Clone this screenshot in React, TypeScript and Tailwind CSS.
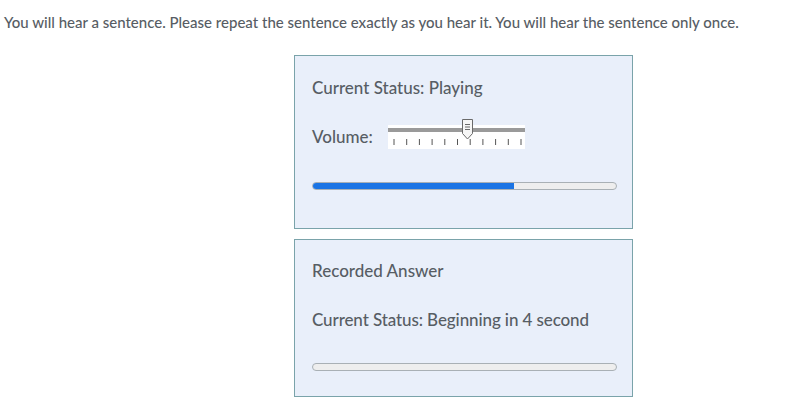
import React from "react";

function Slider() {
  const ticks = Array.from({ length: 11 }, (_, i) => 6 + i * 12.7);
  return (
    <div className="relative w-[137px] h-[24px] bg-white">
      <div className="absolute left-0 right-0 top-[3px] h-[4px] bg-[#9a9a9a]" />
      <svg className="absolute left-0 top-0 overflow-visible" width="137" height="24" viewBox="0 0 137 24">
        {ticks.map((x, i) => (
          <line key={i} x1={x} y1={14} x2={x} y2={20} stroke="#555" strokeWidth="1" />
        ))}
        <path d="M74.5 -5.5 H84.5 V8.5 L79.5 14 L74.5 8.5 Z" fill="#f6f6f6" stroke="#6a6a6a" strokeWidth="1" />
        <line x1="77" y1="-0.5" x2="82" y2="-0.5" stroke="#6a6a6a" />
        <line x1="77" y1="2" x2="82" y2="2" stroke="#6a6a6a" />
        <line x1="77" y1="4.5" x2="82" y2="4.5" stroke="#6a6a6a" />
      </svg>
    </div>
  );
}

function Bar({ pct }: { pct: number }) {
  return (
    <div className="h-[8px] w-[305px] rounded-full border border-[#a9b0b5] bg-[#eeeeee] overflow-hidden">
      <div className="h-full bg-[#1b74e4]" style={{ width: `${pct}%` }} />
    </div>
  );
}

export default function App() {
  return (
    <div
      className="w-[800px] h-[416px] bg-white text-[#575d64] font-medium"
      style={{ fontFamily: "Lato, 'Open Sans', sans-serif" }}
    >
      <div className="pl-[4px] pt-[13px] text-[15px] leading-[18px]">
        You will hear a sentence. Please repeat the sentence exactly as you hear it. You will hear the sentence only once.
      </div>
      <div className="ml-[294px] mt-[24px] w-[339px] flex flex-col gap-[10px]">
        <div className="h-[174px] border border-[#7aa3aa] bg-[#e9effa] px-[17px] pt-[21px]">
          <div className="text-[17px] leading-[22px]">Current Status: Playing</div>
          <div className="mt-[26px] flex items-center gap-[15px] h-[24px]">
            <span className="text-[17px] leading-[22px]">Volume:</span>
            <Slider />
          </div>
          <div className="mt-[33px]">
            <Bar pct={66.5} />
          </div>
        </div>
        <div className="h-[158px] border border-[#7aa3aa] bg-[#e9effa] px-[17px] pt-[20px]">
          <div className="text-[17px] leading-[22px]">Recorded Answer</div>
          <div className="mt-[27px] text-[17px] leading-[22px] tracking-[-0.1px]">Current Status: Beginning in 4 second</div>
          <div className="mt-[32px]">
            <Bar pct={0} />
          </div>
        </div>
      </div>
    </div>
  );
}
